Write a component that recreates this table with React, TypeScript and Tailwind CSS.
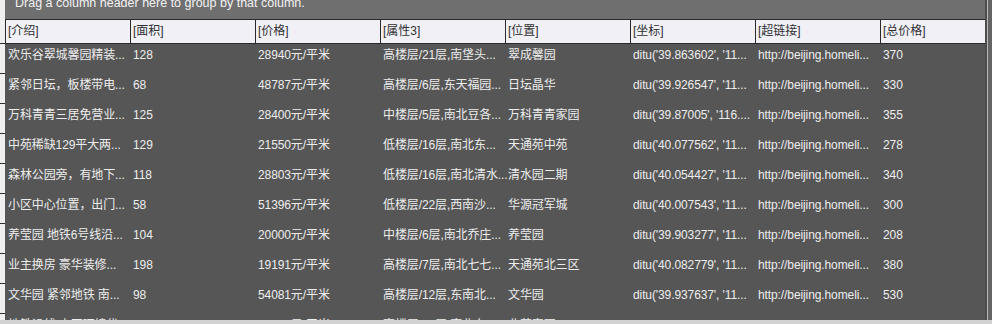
const headers = ["[介绍]", "[面积]", "[价格]", "[属性3]", "[位置]", "[坐标]", "[超链接]", "[总价格]"];

const link = "http://beijing.homeli...";

const rows: string[][] = [
  ["欢乐谷翠城馨园精装...", "128", "28940元/平米", "高楼层/21层,南垡头...", "翠成馨园", "ditu('39.863602', '11...", link, "370"],
  ["紧邻日坛，板楼带电...", "68", "48787元/平米", "高楼层/6层,东天福园...", "日坛晶华", "ditu('39.926547', '11...", link, "330"],
  ["万科青青三居免营业...", "125", "28400元/平米", "中楼层/5层,南北豆各...", "万科青青家园", "ditu('39.87005', '116....", link, "355"],
  ["中苑稀缺129平大两...", "129", "21550元/平米", "低楼层/16层,南北东...", "天通苑中苑", "ditu('40.077562', '11...", link, "278"],
  ["森林公园旁，有地下...", "118", "28803元/平米", "低楼层/16层,南北清水...", "清水园二期", "ditu('40.054427', '11...", link, "340"],
  ["小区中心位置，出门...", "58", "51396元/平米", "低楼层/22层,西南沙...", "华源冠军城", "ditu('40.007543', '11...", link, "300"],
  ["养莹园 地铁6号线沿...", "104", "20000元/平米", "中楼层/6层,南北乔庄...", "养莹园", "ditu('39.903277', '11...", link, "208"],
  ["业主换房 豪华装修...", "198", "19191元/平米", "高楼层/7层,南北七七...", "天通苑北三区", "ditu('40.082779', '11...", link, "380"],
  ["文华园 紧邻地铁 南...", "98", "54081元/平米", "高楼层/12层,东南北...", "文华园", "ditu('39.937637', '11...", link, "530"],
  ["地铁沿线 小区环境优...", "86", "36512元/平米", "高楼层/18层,南北东...", "北苑家园", "ditu('40.043215', '11...", link, "315"],
];

export default function App() {
  return (
    <div className="w-[992px] h-[324px] flex flex-col overflow-hidden bg-[#5c5c5c] font-['Liberation_Sans','Noto_Sans_CJK_SC',sans-serif] text-[12px]">
      <div className="flex flex-1 min-h-0">
        {/* row indicator strip */}
        <div className="w-[5px] shrink-0 bg-[#efefef] flex flex-col">
          <div className="h-[43px] shrink-0" />
          {rows.map((_, i) => (
            <div key={i} className="h-[30px] shrink-0 border-t border-[#2e2e2e]" />
          ))}
        </div>

        {/* grid */}
        <div className="w-[980px] shrink-0 flex flex-col overflow-hidden">
          {/* group panel */}
          <div className="h-[19px] shrink-0 bg-[#6f6f6f] overflow-hidden">
            <div className="pl-[10px] -mt-[5px] text-[12.5px] leading-[16px] text-[#f2f2f2] whitespace-nowrap">
              Drag a column header here to group by that column.
            </div>
          </div>

          {/* header */}
          <div className="h-[25px] shrink-0 bg-[#f1f0f7] border-y border-[#2a2a2a] grid grid-cols-[repeat(8,125px)]">
            {headers.map((h) => (
              <div key={h} className="border-l border-[#2a2a2a] pl-[2px] leading-[22px] text-[#303030] whitespace-nowrap">
                {h}
              </div>
            ))}
          </div>

          {/* rows */}
          <div className="flex-1 min-h-0 overflow-hidden bg-[#565656]">
            {rows.map((r, i) => (
              <div key={i} className="h-[30px] grid grid-cols-[repeat(8,125px)] text-[#ededed]">
                {r.map((c, j) => (
                  <div key={j} className="pl-[3px] pt-[3px] leading-[16px] whitespace-nowrap tracking-[-0.1px]">
                    {c}
                  </div>
                ))}
              </div>
            ))}
          </div>
        </div>

        {/* right frame */}
        <div className="flex-1 flex">
          <div className="w-[2px] bg-[#4c4c4c]" />
          <div className="w-[1px] bg-[#b8b8b8]" />
          <div className="flex-1 bg-[#646464]" />
        </div>
      </div>
      <div className="h-[4px] shrink-0 bg-[#d2d2d2]" />
    </div>
  );
}
